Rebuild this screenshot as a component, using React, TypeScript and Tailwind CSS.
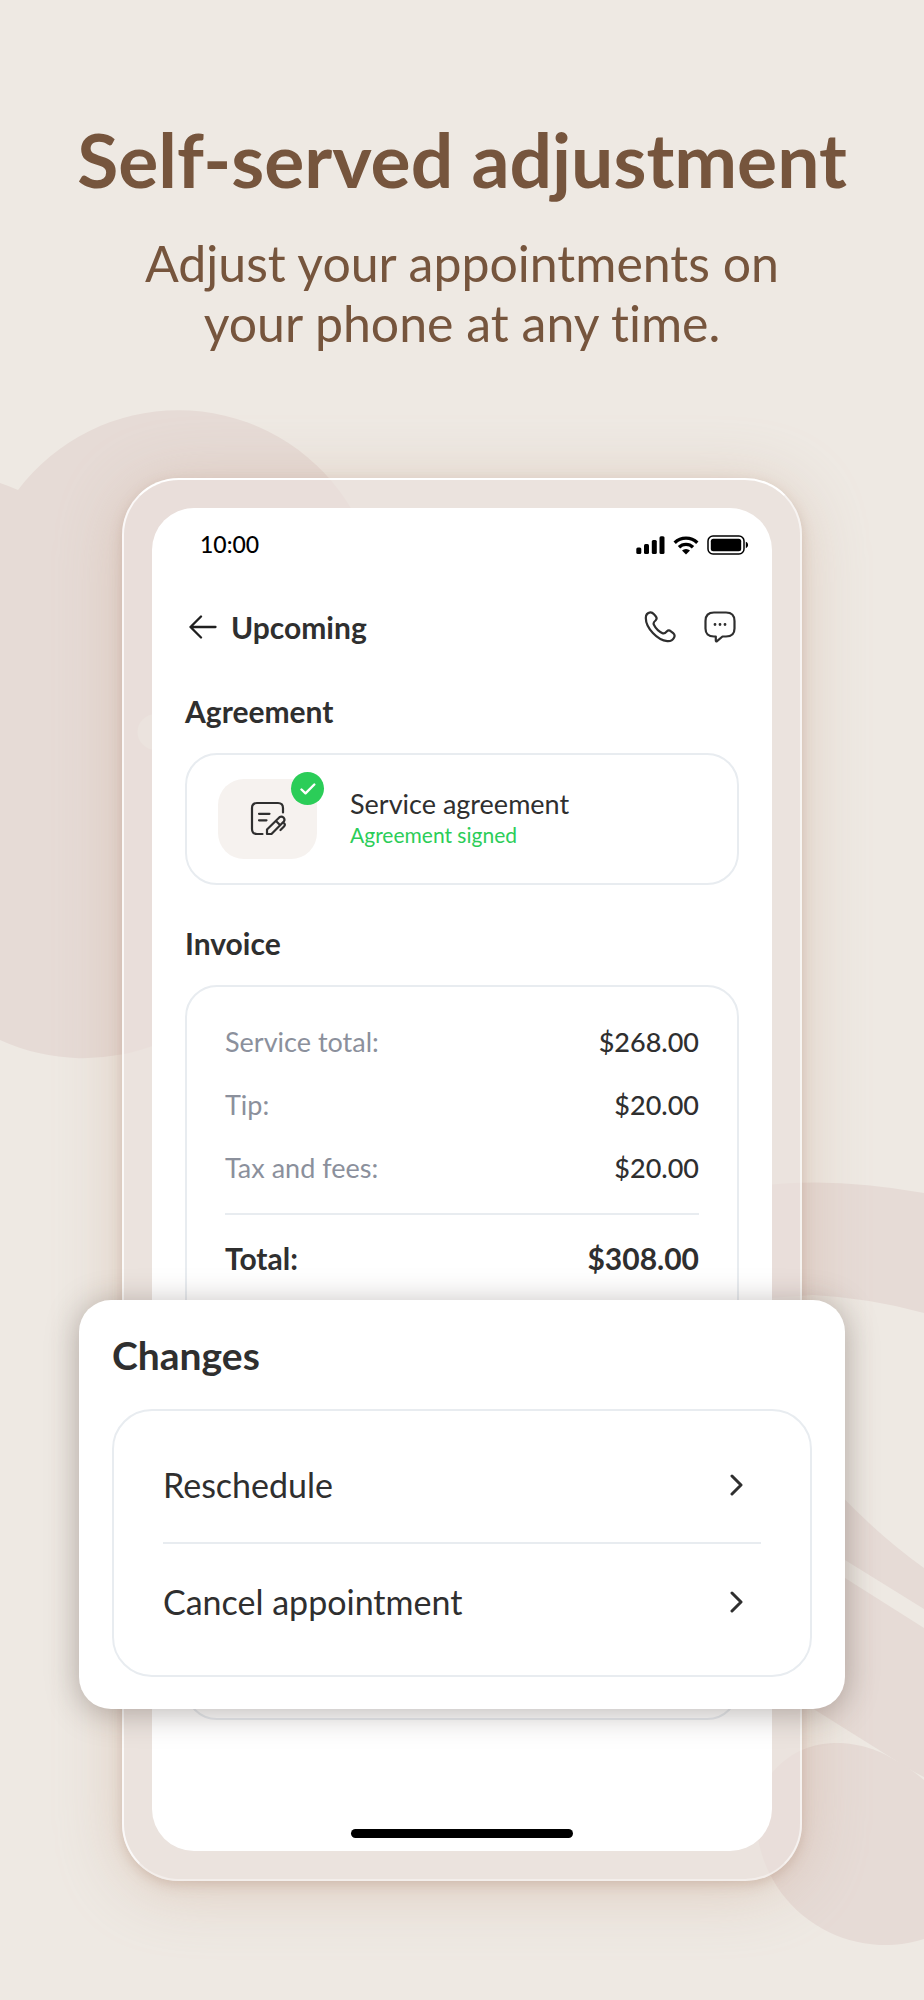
import React from "react";

const invoiceRows = [
  { label: "Service total:", value: "$268.00" },
  { label: "Tip:", value: "$20.00" },
  { label: "Tax and fees:", value: "$20.00" },
];

const changeActions = ["Reschedule", "Cancel appointment"];

function Backdrop() {
  return (
    <div aria-hidden="true" className="absolute inset-0 overflow-hidden">
      <svg className="absolute left-0 top-0" width="400" height="1100" viewBox="0 0 400 1100" fill="#e6dbd6">
        <path d="M0 483Q9 486 18 490A201 201 0 1 1 250 799L270 930A200 200 0 0 1 0 1040Z" />
        <ellipse cx="156" cy="732" rx="18.500" ry="18" fill="#eee9e3" />
      </svg>
      <svg className="absolute right-0 top-0" width="324" height="2000" viewBox="600 0 324 2000" fill="#e6dbd6">
        <path d="M740 1189Q820 1174 924 1193V1313Q870 1298 813 1295L740 1300Z" />
        <path d="M800 1450Q862 1524 924 1568V1609L845 1560L790 1526Z" />
        <path d="M780 1540L845 1578L924 1628V1777Q906 1768 895 1760L780 1688Z" />
        <path d="M756 1816C758 1772 796 1743 835 1743C862 1743 880 1751 895 1760Q910 1768 924 1780V1939A129 129 0 0 1 756 1816Z" />
      </svg>
    </div>
  );
}

function SignalIcon() {
  return (
    <svg width="29" height="18" viewBox="0 0 29 18" aria-hidden="true">
      <rect x="0.300" y="11.500" width="5" height="6.500" rx="1.500" />
      <rect x="8" y="8" width="5" height="10" rx="1.500" />
      <rect x="15.800" y="4" width="5" height="14" rx="1.500" />
      <rect x="23.500" y="0.200" width="5" height="17.800" rx="1.500" />
    </svg>
  );
}

function WifiIcon() {
  return (
    <svg width="26" height="19" viewBox="0 0 26 19" fill="none" stroke="#000" strokeWidth="3.400" aria-hidden="true">
      <path d="M1.700 6.700A16.200 16.200 0 0 1 24.300 6.700" />
      <path d="M6 11.200A10 10 0 0 1 20 11.200" />
      <path d="M13 18.600L9 14.600A5.800 5.800 0 0 1 17 14.600Z" fill="#000" stroke="none" />
    </svg>
  );
}

function BatteryIcon() {
  return (
    <svg width="42" height="20" viewBox="0 0 42 20" aria-hidden="true">
      <rect x="1" y="1" width="36" height="18" rx="5" fill="none" stroke="#000" strokeWidth="1.500" />
      <rect x="3.800" y="3.700" width="30.400" height="12.600" rx="2.500" />
      <path d="M38.800 6.800C41.800 8 41.800 12 38.800 13.200Z" />
    </svg>
  );
}

function ArrowLeftIcon() {
  return (
    <svg width="28" height="24" viewBox="0 0 28 24" fill="none" stroke="#1f1f1f" strokeWidth="2.300" strokeLinecap="round" strokeLinejoin="round" aria-hidden="true">
      <path d="M26.500 12H1.500M12 1.500L1.500 12L12 22.500" />
    </svg>
  );
}

function PhoneIcon() {
  return (
    <svg width="32" height="32" viewBox="0 0 32 32" fill="none" stroke="#2f2f2f" strokeWidth="2.200" strokeLinecap="round" strokeLinejoin="round" aria-hidden="true">
      <path d="M1.800 7C1.800 4.200 3.600 1.800 6.400 1.400C7.900 1.300 9 2.200 10 3.300L11.700 5.200C13 6.800 12.800 8.300 11.500 9.500C9.600 11 9 12 9.900 13.700C11.800 17.500 15 20.500 18.500 22.200C20.200 23 21.400 22 22.700 20.500C24 19.200 25.400 19.100 26.900 20.300L29.200 22.200C30.700 23.500 31 25 30 26.700C28.600 29.300 26 30.300 23.300 30.100C13.500 29.300 1.800 17 1.800 7Z" />
    </svg>
  );
}

function ChatIcon() {
  return (
    <svg width="32" height="32" viewBox="0 0 32 32" fill="none" stroke="#2f2f2f" strokeWidth="2.200" strokeLinecap="round" strokeLinejoin="round" aria-hidden="true">
      <path d="M10 1.500H22Q30.500 1.500 30.500 10V17.500Q30.500 25.500 22 25.500H18.500L13 30.200Q11.800 30.800 11.800 29.500V25.500H10Q1.500 25.500 1.500 17.500V10Q1.500 1.500 10 1.500Z" />
      <path d="M11 13.500H11.010M16 13.500H16.010M21 13.500H21.010" strokeWidth="2.800" />
    </svg>
  );
}

function AgreementIcon() {
  return (
    <svg width="36" height="36" viewBox="0 0 36 36" fill="none" stroke="#2f2f2f" strokeWidth="2.200" strokeLinecap="round" strokeLinejoin="round" aria-hidden="true">
      <path d="M12.500 33H7Q2 33 2 28V7Q2 2 7 2H28Q33 2 33 7V11.500M9 12.800H19.500M9 19.300H16.500" />
      <path d="M17 33V28.500L29.500 16.200Q31.500 14.700 33.500 16.500Q35.300 18.500 33.800 20.500L21.500 33ZM26 20L30 24M34.300 22.500Q35.500 24 34 25.500L30.500 29" />
    </svg>
  );
}

function ChevronRightIcon() {
  return (
    <svg width="14" height="22" viewBox="0 0 14 22" fill="none" stroke="#2f2f2f" strokeWidth="3" strokeLinecap="round" strokeLinejoin="round" aria-hidden="true">
      <path d="M2 2L11 11L2 20" />
    </svg>
  );
}

function ChangesCard() {
  return (
    <section className="relative -mx-[146px] mt-[11px] rounded-[32px] bg-white px-[33px] pb-8 pt-[33px] shadow-[0_4px_32px_rgba(60,45,40,0.35)]">
      <h2 className="text-[39px] font-bold leading-[44px]">Changes</h2>
      <div className="mt-8 rounded-[40px] border-2 border-[#e8ecf0] px-[49px] py-4">
        <ul className="divide-y-2 divide-[#e8ecf0]">
          {changeActions.map((action) => (
            <li key={action}>
              <button type="button" className="flex h-[115px] w-full items-center justify-between pr-[17px] text-left text-[34px]">
                {action}
                <ChevronRightIcon />
              </button>
            </li>
          ))}
        </ul>
      </div>
    </section>
  );
}

export default function App() {
  return (
    <div className="relative min-h-screen overflow-hidden bg-[#eee9e3] font-['Lato',sans-serif] text-[#2f2f2f] [font-variant-ligatures:none]">
      <Backdrop />
      <main className="relative flex flex-col items-center px-[122px] pb-[119px] pt-[119px]">
        <header className="-mx-[100px] text-center text-[#76553d]">
          <h1 className="text-[75px] font-bold leading-[80px]">Self-served adjustment</h1>
          <p className="mt-[34px] text-[50px] leading-[60px]">
            Adjust your appointments on
            <br />
            your phone at any time.
          </p>
        </header>

        <div className="mt-[125px] w-full max-w-[680px] rounded-[57px] border-2 border-b-white/40 border-l-white/80 border-r-white/60 border-t-white bg-[#eae0db]/70 px-7 pb-7 pt-7 shadow-[0_4px_12px_rgba(175,140,120,0.35),0_8px_64px_rgba(200,165,142,0.45)]">
          <div className="flex flex-col rounded-[42px] bg-white px-[33px] pb-[13px]">
            <div className="flex h-[72px] items-center justify-between pl-[15px] text-black">
              <time className="text-[23px] font-medium">10:00</time>
              <div className="-mr-[10px] flex items-center gap-2 pt-[2px]">
                <SignalIcon />
                <WifiIcon />
                <BatteryIcon />
              </div>
            </div>

            <div className="flex h-[94px] items-center justify-between pl-1">
              <div className="flex items-center gap-[14px]">
                <button type="button" aria-label="Back">
                  <ArrowLeftIcon />
                </button>
                <h2 className="text-[30px] font-bold leading-9">Upcoming</h2>
              </div>
              <div className="flex items-center gap-7 pr-[3px]">
                <button type="button" aria-label="Call">
                  <PhoneIcon />
                </button>
                <button type="button" aria-label="Message">
                  <ChatIcon />
                </button>
              </div>
            </div>

            <section className="mt-[19px]">
              <h2 className="text-[30px] font-bold leading-9">Agreement</h2>
              <div className="mt-6 flex items-center gap-[33px] rounded-[32px] border-2 border-[#e8ecf0] px-[31px] py-6">
                <div className="relative flex h-20 w-[99px] items-center justify-center rounded-[26px] bg-[#f6f2ef]">
                  <AgreementIcon />
                  <span className="absolute -right-[7px] -top-[7px] flex size-[33px] items-center justify-center rounded-full bg-[#2bcd58]">
                    <svg width="16" height="12" viewBox="0 0 16 12" fill="none" stroke="#fff" strokeWidth="2.400" strokeLinecap="round" strokeLinejoin="round" aria-hidden="true">
                      <path d="M1.500 6.500L5.500 10.300L14.300 1.500" />
                    </svg>
                  </span>
                </div>
                <div>
                  <p className="text-[27px] leading-8">Service agreement</p>
                  <p className="text-[21px] leading-[30px] text-[#2bcd58]">Agreement signed</p>
                </div>
              </div>
            </section>

            <section className="mt-10">
              <h2 className="text-[30px] font-bold leading-9">Invoice</h2>
              <div className="mt-6 rounded-[32px] border-2 border-[#e8ecf0] px-[38px] pb-[9px] pt-6">
                <dl>
                  {invoiceRows.map((row) => (
                    <div key={row.label} className="flex h-[63px] items-center justify-between text-[27px]">
                      <dt className="text-[#8b909c]">{row.label}</dt>
                      <dd className="font-medium">{row.value}</dd>
                    </div>
                  ))}
                  <div className="mt-[13px] border-t-2 border-[#e8ecf0] pt-3">
                    <div className="flex h-[62px] items-center justify-between text-[30px] font-bold">
                      <dt>Total:</dt>
                      <dd>{"$308.00"}</dd>
                    </div>
                  </div>
                </dl>
                <ChangesCard />
              </div>
            </section>

            <div className="mt-[109px] h-[9px] w-[222px] self-center rounded-full bg-black" />
          </div>
        </div>
      </main>
    </div>
  );
}
